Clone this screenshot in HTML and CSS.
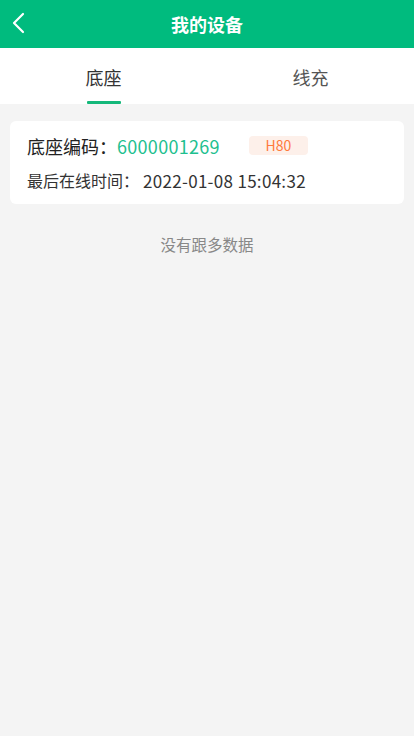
FILE: index.html
```html
<!DOCTYPE html>
<html lang="zh-CN">
<head>
<meta charset="utf-8">
<meta name="viewport" content="width=device-width, initial-scale=1">
<title>我的设备</title>
<link rel="stylesheet" href="styles.css">
</head>
<body>
<header class="nav">
  <span class="back">
    <svg width="14" height="22" viewBox="0 0 14 22"><polyline points="11,2 2,11 11,20" fill="none" stroke="#fff" stroke-width="2.2" stroke-linecap="round" stroke-linejoin="round"/></svg>
  </span>
  <h1 class="title">我的设备</h1>
</header>
<nav class="tabs">
  <div class="tab active"><span class="tab-text">底座</span><span class="tab-line"></span></div>
  <div class="tab"><span class="tab-text">线充</span><span class="tab-line"></span></div>
</nav>
<main class="list">
  <div class="card">
    <div class="row row-code">
      <span class="label">底座编码：</span><span class="code">6000001269</span><span class="badge">H80</span>
    </div>
    <div class="row row-time"><span class="label-time">最后在线时间：</span><span class="date">2022-01-08 15:04:32</span></div>
  </div>
  <p class="empty">没有跟多数据</p>
</main>
</body>
</html>
```
FILE: styles.css
```css
* { box-sizing: border-box; }
html, body { margin: 0; padding: 0; }
body {
  background: #f4f4f4;
  font-family: "Noto Sans CJK SC", "Noto Sans", sans-serif;
  width: 414px;
  min-height: 736px;
}
.nav {
  height: 48px;
  background: #00bb7e;
  display: flex;
  align-items: center;
  justify-content: center;
  position: relative;
}
.back {
  position: absolute;
  left: 12px;
  top: 12px;
  width: 14px;
  height: 22px;
  display: flex;
}
.title {
  margin: 0;
  color: #fff;
  font-size: 18px;
  font-weight: 700;
  line-height: 48px;
}
.tabs {
  display: flex;
  background: #fff;
  height: 56px;
}
.tab {
  flex: 1;
  display: flex;
  flex-direction: column;
  align-items: center;
  padding-top: 16px;
}
.tab-text {
  font-size: 18px;
  line-height: 26px;
  color: #555;
}
.tab.active .tab-text { color: #333; }
.tab-line {
  margin-top: 11px;
  width: 34px;
  height: 3px;
  border-radius: 1px;
  background: transparent;
}
.tab.active .tab-line { background: #14b87a; }
.list {
  padding: 17px 10px 0;
}
.card {
  background: #fff;
  border-radius: 6px;
  padding: 12px 17px 12px;
}
.row-code {
  display: flex;
  align-items: center;
  height: 26px;
  font-size: 18px;
  color: #222;
}
.label { color: #222; }
.code { color: #1ec08f; letter-spacing: 0.3px; }
.badge {
  margin-left: 29px;
  width: 59px;
  height: 19px;
  margin-top: -2px;
  border-radius: 4px;
  background: #fdf0ea;
  color: #ff7a3d;
  font-size: 14px;
  line-height: 19px;
  text-align: center;
}
.row-time {
  margin-top: 9px;
  height: 24px;
  display: flex;
  align-items: center;
  font-size: 16px;
  color: #333;
}
.date {
  margin-left: 4px;
  font-size: 17px;
  letter-spacing: 0.3px;
}
.empty {
  margin: 29px 0 0;
  text-align: center;
  font-size: 15.5px;
  line-height: 22px;
  color: #888;
}
```
